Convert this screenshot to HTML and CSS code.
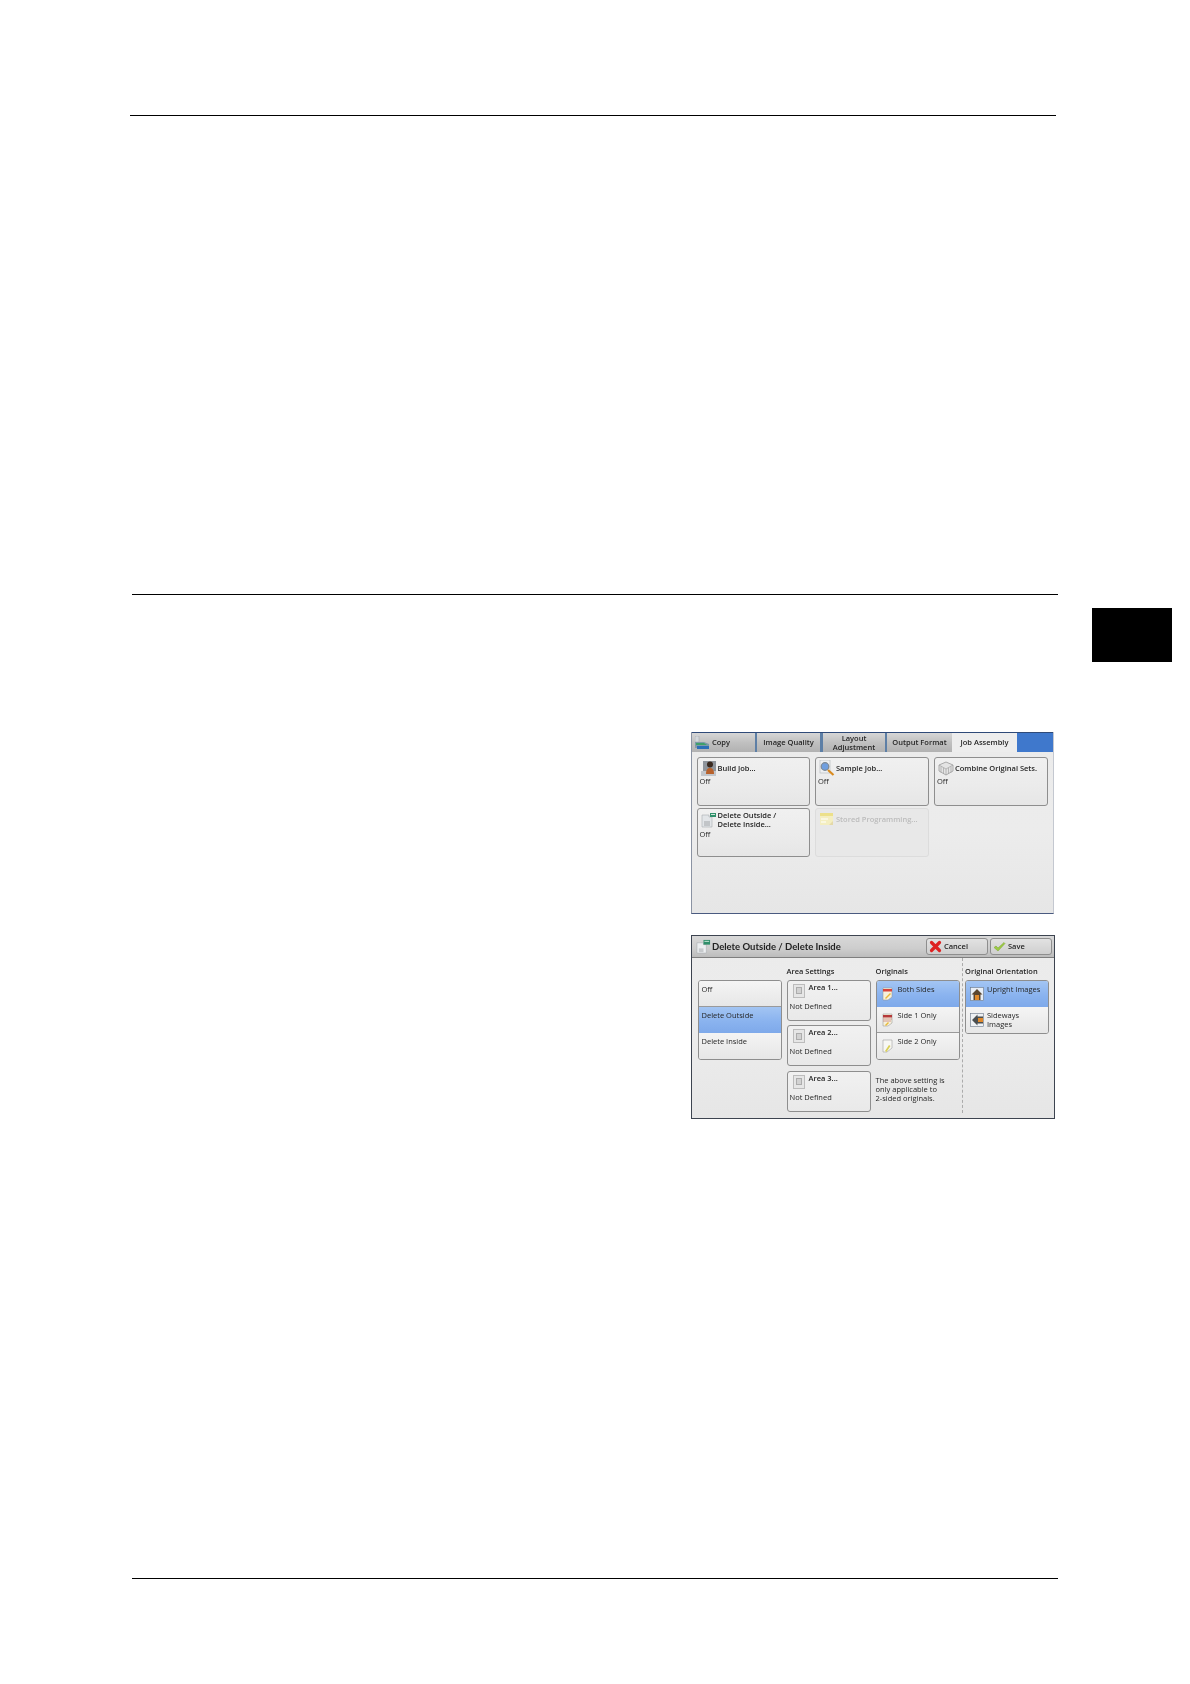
FILE: index.html
```html
<!DOCTYPE html>
<html lang="en">
<head>
<meta charset="utf-8">
<title>Delete Outside / Delete Inside</title>
<link rel="stylesheet" href="styles.css">
</head>
<body>
<div class="page">
  <div class="rule rule-top"></div>
  <div class="rule rule-mid"></div>
  <div class="thumb-tab"></div>
  <div class="figures">

    <div class="panel panel-tabs">
      <div class="tabbar">
        <div class="tab tab-copy">
          <svg class="ico-copy" viewBox="0 0 14 14"><rect x="0" y="0" width="4" height="6" fill="#d4d8dc" stroke="#9aa0a6" stroke-width=".5"/><path d="M0 6h9l5 2v2H0z" fill="#7d9aa8"/><path d="M1 7h8l3 2H1z" fill="#3fa06a"/><rect x="2" y="10" width="12" height="3" fill="#2c6fb8"/><rect x="0" y="10" width="2" height="2" fill="#8a9aa6"/></svg>
          <span>Copy</span>
        </div>
        <div class="tab tab-iq">Image Quality</div>
        <div class="tab tab-la">Layout<br>Adjustment</div>
        <div class="tab tab-of">Output Format</div>
        <div class="tab tab-ja">Job Assembly</div>
        <div class="tab-fill"></div>
      </div>
      <div class="grid-fn">
        <div class="fn">
          <div class="fn-head">
            <svg class="ico" viewBox="0 0 16 16"><rect x="2" y="1" width="13" height="12" fill="#8f959c"/><rect x="0" y="11" width="15" height="5" fill="#c2c6cb"/><circle cx="9" cy="4.500" r="3" fill="#3a2a20"/><path d="M5 14c0-5 2-6 4-6s4 1 4 6z" fill="#b8622c"/></svg>
            <span>Build Job...</span>
          </div>
          <div class="fn-val">Off</div>
        </div>
        <div class="fn">
          <div class="fn-head">
            <svg class="ico" viewBox="0 0 16 16"><rect x="1" y="0" width="10" height="13" fill="#eef0f2" stroke="#b0b4b8" stroke-width=".6"/><circle cx="6" cy="6.500" r="3.800" fill="#6f9fe0" stroke="#7d8894" stroke-width="1.200"/><path d="M9 10l5.500 5" stroke="#d98a1e" stroke-width="2.200"/></svg>
            <span>Sample Job...</span>
          </div>
          <div class="fn-val">Off</div>
        </div>
        <div class="fn">
          <div class="fn-head">
            <svg class="ico" viewBox="0 0 16 16"><path d="M1 5l7-3 7 3v6l-7 4-7-4z" fill="#e4e4e4" stroke="#9a9a9a" stroke-width=".8"/><path d="M1 5l7 4 7-4M3 6.500v6M5.500 8v6M10.500 8v6M13 6.500v6M8 9v6" fill="none" stroke="#a2a2a2" stroke-width=".7"/></svg>
            <span>Combine Original Sets.</span>
          </div>
          <div class="fn-val">Off</div>
        </div>
        <div class="fn">
          <div class="fn-head">
            <svg class="ico" viewBox="0 0 16 16"><path d="M1 3h7v2h3v10H1z" fill="#e2e5e8" stroke="#a8acb0" stroke-width=".6"/><rect x="3" y="9" width="6" height="5" fill="#c2c5c8"/><rect x="9" y="1" width="6" height="4" fill="#2f8f6a"/><rect x="10" y="2" width="4" height="1" fill="#cfe8dc"/></svg>
            <span>Delete Outside /<br>Delete Inside...</span>
          </div>
          <div class="fn-val">Off</div>
        </div>
        <div class="fn fn-off">
          <div class="fn-head fn-head-mid">
            <svg class="ico" viewBox="0 0 16 16"><rect x="1" y="2" width="13" height="12" fill="#f4eec0"/><rect x="1" y="2" width="13" height="3" fill="#ece08a"/><path d="M2 8h7M2 11h5" stroke="#fff" stroke-width="1.200"/><path d="M10 14l4-4v4z" fill="#e4d9a8"/></svg>
            <span>Stored Programming...</span>
          </div>
        </div>
      </div>
    </div>

    <div class="panel panel-dlg">
      <div class="dlg-head">
        <svg class="ico-title" viewBox="0 0 16 16"><path d="M1 4h7v2h3v9H1z" fill="#eceef0" stroke="#a8acb0" stroke-width=".6"/><rect x="3" y="10" width="5" height="4" fill="#c6c9cc"/><rect x="8" y="1" width="7" height="5" fill="#2f8f6a"/><rect x="9" y="2" width="5" height="1" fill="#cfe8dc"/></svg>
        <span class="dlg-title">Delete Outside / Delete Inside</span>
        <div class="cmd cmd-cancel">
          <svg class="ico-cmd" viewBox="0 0 13 13"><path d="M2.500 2.500l8 8M10.500 2.500l-8 8" fill="none" stroke="#de2222" stroke-width="3.200" stroke-linecap="round"/></svg>
          <span>Cancel</span>
        </div>
        <div class="cmd">
          <svg class="ico-cmd" viewBox="0 0 13 13"><path d="M1 7.500L3 6l2 2 6-5.500 1 1-7 7.500z" fill="#9ccb45" stroke="#7aa32e" stroke-width=".5"/></svg>
          <span>Save</span>
        </div>
      </div>
      <div class="dlg-body">
        <div class="col">
          <div class="col-label">&nbsp;</div>
          <div class="list">
            <div class="item">Off</div>
            <div class="item item-on">Delete Outside</div>
            <div class="item">Delete Inside</div>
          </div>
        </div>
        <div class="col">
          <div class="col-label">Area Settings</div>
          <div class="areas">
            <div class="area">
              <div class="area-head"><span class="check"><i></i></span><span>Area 1...</span></div>
              <div class="area-val">Not Defined</div>
            </div>
            <div class="area">
              <div class="area-head"><span class="check"><i></i></span><span>Area 2...</span></div>
              <div class="area-val">Not Defined</div>
            </div>
            <div class="area">
              <div class="area-head"><span class="check"><i></i></span><span>Area 3...</span></div>
              <div class="area-val">Not Defined</div>
            </div>
          </div>
        </div>
        <div class="col">
          <div class="col-label">Originals</div>
          <div class="list">
            <div class="item item-ico item-on">
              <svg class="ico-side" viewBox="0 0 11 14"><path d="M1 1h9v9l-4 3H1z" fill="#f6f1dc" stroke="#8f8f8f" stroke-width=".5"/><rect x="1" y="2" width="9" height="2.500" fill="#d8433a"/><path d="M3 11l5-5 1 1-5 5z" fill="#e8b93a"/></svg>
              <span>Both Sides</span>
            </div>
            <div class="item item-ico">
              <svg class="ico-side" viewBox="0 0 11 14"><path d="M1 1h9v9l-4 3H1z" fill="#f6f1dc" stroke="#8f8f8f" stroke-width=".5"/><rect x="1" y="2" width="9" height="2.500" fill="#b5393a"/><path d="M1 6h9M1 8h8" stroke="#c9837e" stroke-width=".8"/><path d="M3 12l3-3 1 1-3 3z" fill="#e8b93a"/></svg>
              <span>Side 1 Only</span>
            </div>
            <div class="item item-ico">
              <svg class="ico-side" viewBox="0 0 11 14"><path d="M1 1h9v8l-5 4H1z" fill="#f7f7f4" stroke="#8f8f8f" stroke-width=".5"/><path d="M3 12l4-6 1.500 1-4 6z" fill="#d9cf55"/></svg>
              <span>Side 2 Only</span>
            </div>
          </div>
          <p class="note">The above setting is<br>only applicable to<br>2-sided originals.</p>
        </div>
        <div class="col col-last">
          <div class="col-label">Original Orientation</div>
          <div class="list">
            <div class="item item-ico item-on">
              <svg class="ico-house" viewBox="0 0 14 14"><rect x=".5" y=".5" width="13" height="13" fill="#e8eef6" stroke="#6a7788" stroke-width=".6"/><path d="M7 2L1.500 7.500h2V13h7V7.500h2z" fill="#5b4630"/><rect x="5" y="8" width="4" height="5" fill="#e08a2c"/></svg>
              <span>Upright Images</span>
            </div>
            <div class="item item-ico">
              <svg class="ico-house" viewBox="0 0 14 14"><rect x=".5" y=".5" width="13" height="13" fill="#eef1f4" stroke="#6a7788" stroke-width=".6"/><path d="M2 7l5.500-5.500v2H13v7H7.500v2z" fill="#4b4f50"/><rect x="8" y="5" width="5" height="4" fill="#e08a2c"/></svg>
              <span>Sideways<br>Images</span>
            </div>
          </div>
        </div>
      </div>
    </div>

  </div>
  <div class="rule rule-bottom"></div>
</div>
</body>
</html>
```

FILE: styles.css
```css
* { box-sizing: border-box; }
html, body { margin: 0; padding: 0; background: #fff; }
.page { width: 1190px; height: 1684px; overflow: hidden; }

.rule { width: 926px; height: 1.4px; background: #000; }
.rule-top { margin: 115px 0 0 130px; }
.rule-mid { margin: 477.6px 0 0 132px; }
.rule-bottom { margin: 458.6px 0 0 132px; }

.thumb-tab { width: 80px; height: 54px; margin: 13px 0 0 1092px; background: #000; }

.figures {
  display: flex; flex-direction: column; gap: 21px;
  margin-top: 70px; padding-left: 691px;
  font-family: "Open Sans", "Noto Sans", sans-serif;
  color: #262626; font-size: 7.5px; line-height: 9px; font-weight: 500;
}

.panel { filter: blur(0.4px); background: linear-gradient(#ebebeb, #ececec 55%, #e6e6e6); }

/* Function tabs panel */
.panel-tabs { width: 363px; height: 182px; border-bottom: 1.5px solid #4a5a80; border-left: 1px solid #8b93a3; border-right: 1px solid #c4c8d0; }
.tabbar { display: flex; height: 20px; background: #5d7fa6; border-top: 1.5px solid #2f4a78; }
.tab {
  display: flex; align-items: center; justify-content: center; text-align: center;
  margin-right: 2px; font-weight: 600;
  background: linear-gradient(#d6d6d6, #c0c0c0 50%, #b2b2b2);
}
.tab-copy { width: 63px; justify-content: flex-start; padding-left: 3px; gap: 3px; }
.tab-iq { width: 63px; margin-right: 3px; }
.tab-la { width: 62px; }
.tab-of { width: 65px; margin-right: 0; }
.tab-ja { width: 65px; margin-right: 0; background: #ededed; }
.tab-fill { flex: 1; background: #3f78cc; }
.ico-copy { width: 14px; height: 14px; flex: none; }

.grid-fn {
  display: grid; grid-template-columns: 113.5px 114px 114px; grid-auto-rows: 49px;
  column-gap: 5px; row-gap: 2px; padding: 5px 0 0 4.5px;
}
.fn {
  border: 1px solid #8e8e8e; border-radius: 3px; padding: 2px;
  background: linear-gradient(#f0f0f0, #ebebeb 60%, #e6e6e6);
}
.fn-head { display: flex; align-items: center; gap: 1px; min-height: 16px; padding-left: 1px; font-weight: 600; }
.fn-val { margin-top: 1px; }
.ico { width: 16px; height: 16px; flex: none; }
.fn-off { border-color: #dcdcdc; color: #bcbcbc; background: #e8e8e8; }

/* Dialog panel */
.panel-dlg { width: 364px; height: 184px; border: 1.5px solid #3d4450; }
.dlg-head {
  display: flex; align-items: center; height: 21.5px; padding-left: 4px;
  background: linear-gradient(#d8d8d8, #cdcdcd 60%, #bcbcbc);
  border-bottom: 1px solid #7e7e7e;
}
.ico-title { width: 15px; height: 15px; flex: none; margin-right: 1px; }
.dlg-title { font-family: "Lato", "Open Sans", sans-serif; font-size: 9.5px; line-height: 12px; font-weight: 700; color: #222; margin-right: auto; padding-top: 1px; }
.cmd {
  display: flex; align-items: center; gap: 2px; width: 62px; height: 17px; margin-right: 2px;
  padding-left: 2px; border: 1px solid #8e8e8e; border-radius: 3px; font-weight: 600;
  background: linear-gradient(#e2e2e2, #cfcfcf);
}
.ico-cmd { width: 13px; height: 13px; flex: none; }

.dlg-body {
  display: grid; grid-template-columns: 84px 84px 84px 86px; column-gap: 5px;
  height: 159px; padding: 0 0 4px 5.5px;
}
.col-last { border-left: 1px dashed #ababab; padding-left: 2.5px; margin-left: -3px; width: 87.5px; }
.col-label { height: 22px; padding-top: 9.5px; font-weight: 600; }

.list { border: 1px solid #8e8e8e; border-radius: 3px; overflow: hidden; }
.item {
  height: 26px; padding: 4px 3px 0; border-bottom: 1px solid #9a9a9a;
  background: linear-gradient(#f4f4f4, #e7e7e7);
}
.item:last-child { border-bottom: 0; }
.item-on { background: linear-gradient(#a3c5f3, #8ab3ef 55%, #7ea9ea); border-bottom: 0; }
.item-ico { display: flex; gap: 5px; padding-left: 5px; }
.ico-side { width: 11px; height: 14px; flex: none; margin-top: 2px; }
.ico-house { width: 14px; height: 14px; flex: none; margin-top: 2px; }
.col-last .item-ico { gap: 3px; padding-left: 4px; }

.areas { display: flex; flex-direction: column; gap: 4.5px; }
.area {
  height: 41px; border: 1px solid #8e8e8e; border-radius: 3px; padding: 2px;
  background: linear-gradient(#f1f1f1, #e9e9e9);
}
.area-head { display: flex; gap: 4px; height: 14px; padding-left: 3px; font-weight: 600; }
.check {
  display: flex; align-items: center; justify-content: center; margin-top: 1px;
  width: 12px; height: 14px; flex: none; border: 1px solid #bcbcbc; background: #e6e6e6;
}
.check i { display: block; width: 6px; height: 7px; background: #d2d2d2; border: 1px solid #acacac; }
.area-val { margin-top: 5px; }

.note { margin: 16.5px 0 0; }
```
